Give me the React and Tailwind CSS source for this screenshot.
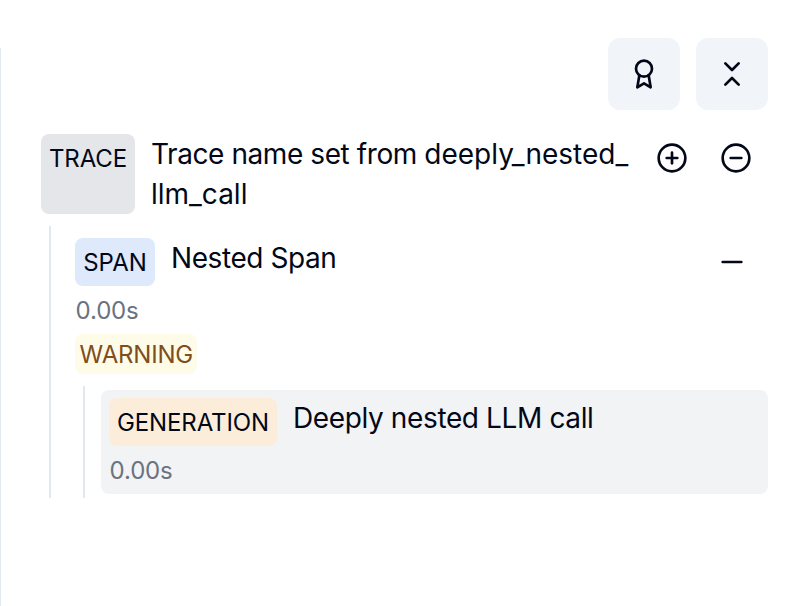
import { ChevronsDownUp, CirclePlus, CircleMinus, Minus } from "lucide-react";

function Badge({ className, children }) {
  return <span className={"shrink-0 rounded-[8px] text-[24px] leading-[32px] " + className}>{children}</span>;
}

function AwardIcon() {
  return (
    <svg width="32" height="32" viewBox="0 0 24 24" fill="none" stroke="currentColor" strokeWidth="2" strokeLinecap="round" strokeLinejoin="round">
      <circle cx="12" cy="8" r="6" />
      <path d="M15.477 12.89 17 22l-5-3-5 3 1.523-9.11" />
    </svg>
  );
}

function Duration() {
  return <div className="mt-[9px] h-[31px] pl-[0.6px] text-[24px] leading-[32px] tracking-[-0.15px] text-[#6b7280]">0.00s</div>;
}

export default function App() {
  return (
    <div className="h-[606px] w-[788px] overflow-hidden bg-white font-['Inter',sans-serif] text-[#020817]">
      <div className="flex h-full">
        <div className="mt-[48px] w-px shrink-0 bg-[#e2e8f0]" />
        <div className="min-w-0 flex-1 pt-[38px] pr-5 pl-10">
          <div className="flex justify-end gap-4">
            <button className="flex size-[72px] items-center justify-center rounded-[12px] bg-[#f1f5f9]"><AwardIcon /></button>
            <button className="flex size-[72px] items-center justify-center rounded-[12px] bg-[#f1f5f9]"><ChevronsDownUp size={32} /></button>
          </div>
          <div className="mt-6 flex h-20">
            <Badge className="w-[94px] bg-[#e5e6ea] pt-[9px] text-center tracking-[-0.1px]">TRACE</Badge>
            <div className="ml-4 w-[489px] text-[28px] leading-[40px]"><span className="tracking-[-0.42px]">Trace name set from </span>deeply_nested_<br />llm_call</div>
            <div className="mt-2 ml-4 flex gap-8"><CirclePlus size={32} /><CircleMinus size={32} /></div>
          </div>
          <div className="mt-3 ml-2 h-[272px] border-l-2 border-[#e2e7ee] pt-3 pl-6">
            <div className="flex h-12 items-start">
              <Badge className="h-12 w-20 bg-[#dee9fc] pt-[9px] text-center">SPAN</Badge>
              <span className="ml-4 text-[28px] leading-[40px] tracking-[-0.42px]">Nested Span</span>
              <Minus size={32} className="mt-2 mr-5 ml-auto" />
            </div>
            <Duration />
            <div className="mt-2 flex"><Badge className="h-10 w-[122px] bg-[#fefce9] pt-[5px] pl-[4.6px] tracking-[-0.2px] text-[#804d1b]">WARNING</Badge></div>
            <div className="mt-3 ml-2 h-[112px] border-l-2 border-[#e2e7ee] pt-1 pl-4">
              <div className="h-[104px] rounded-[8px] bg-[#f2f3f5] p-2">
                <div className="flex h-12 items-start">
                  <Badge className="h-12 w-[168px] bg-[#fcedda] pt-[9px] text-center tracking-[-0.1px]">GENERATION</Badge>
                  <span className="ml-4 text-[28px] leading-[40px] tracking-[-0.38px]">Deeply nested LLM call</span>
                </div>
                <Duration />
              </div>
            </div>
          </div>
        </div>
      </div>
    </div>
  );
}
